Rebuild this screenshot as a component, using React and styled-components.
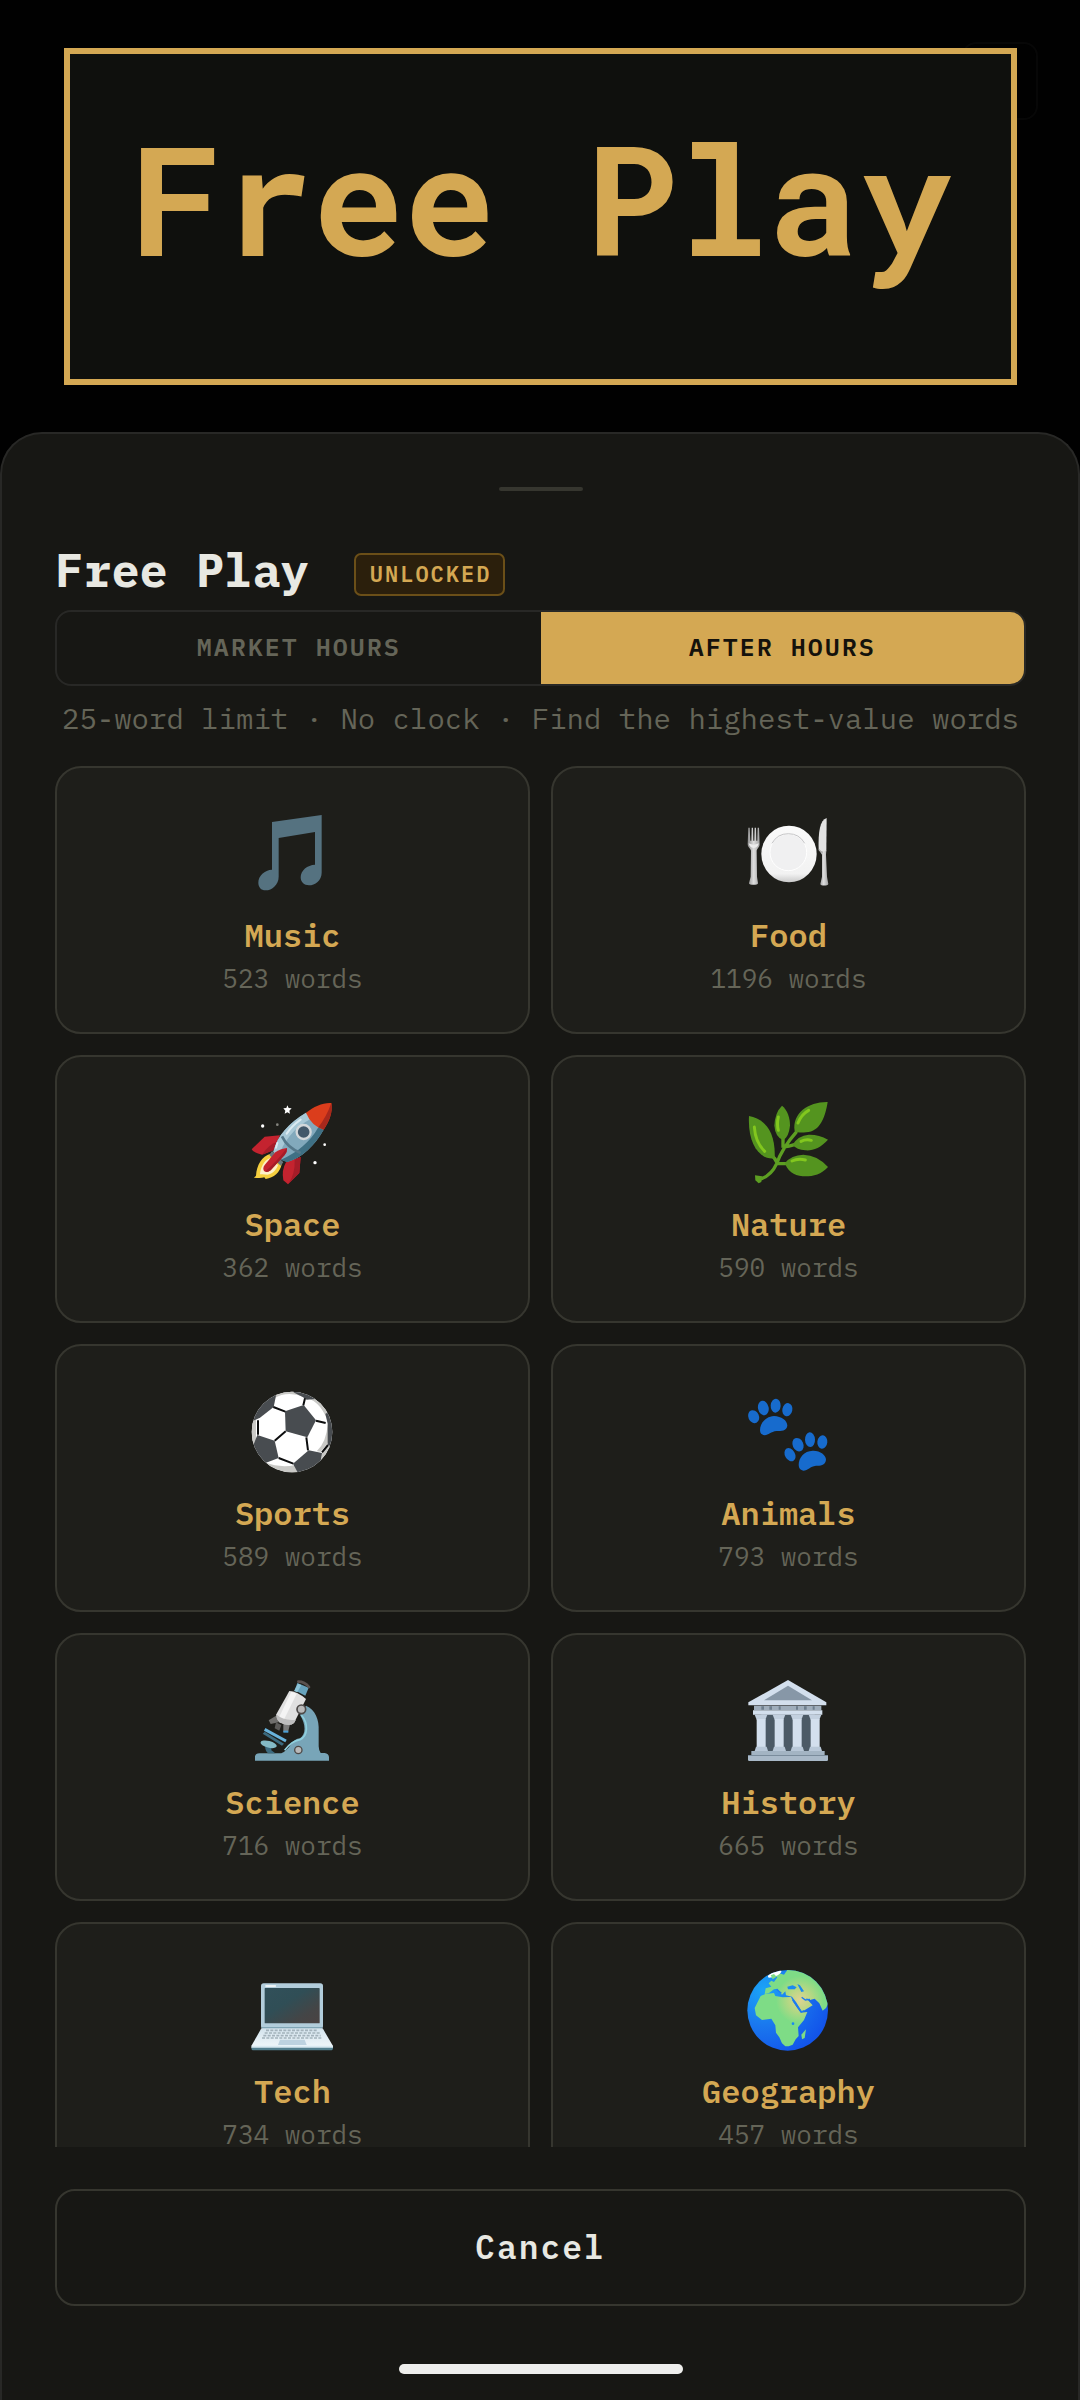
import React, { useState } from 'react';
import styled, { createGlobalStyle } from 'styled-components';

const MusicIcon = () => (
  <Emoji viewBox="637 159 246 246" aria-hidden="true">
    <path
      fill="#557280"
      d="M697 186L846 165V338C846 362 826 376 808 376C793 376 783 366 783 352C783 331 803 315 826 314V216L717 234V350C717 374 697 391 678 391C664 391 656 381 656 368C656 347 675 330 697 329Z"
    />
  </Emoji>
);

const FoodIcon = () => (
  <Emoji viewBox="624 159 246 246" aria-hidden="true">
    <defs>
      <linearGradient id="steel" x1="0" x2="1">
        <stop offset="0" stopColor="#8f8f8f" />
        <stop offset="0.5" stopColor="#dedede" />
        <stop offset="1" stopColor="#a2a2a2" />
      </linearGradient>
      <linearGradient id="plate" x1="0" x2="0" y1="0" y2="1">
        <stop offset="0" stopColor="#fafafa" />
        <stop offset="0.85" stopColor="#f2f2f2" />
        <stop offset="1" stopColor="#c9c9c9" />
      </linearGradient>
    </defs>
    <path
      fill="url(#steel)"
      d="M625 203H629L631 242H634L635 203H639L640 242H643L644 203H648L649 242H652L653 203H657L659 252C659 262 651 266 650 272L651 350L654 370C654 376 627 376 627 370L632 350L633 272C632 266 623 262 623 252Z"
    />
    <path fill="#ececec" d="M626 250Q641 258 656 250Q655 262 641 264Q628 262 626 250Z" />
    <ellipse cx="747" cy="282" rx="83" ry="85" fill="url(#plate)" />
    <circle cx="745" cy="277" r="55" fill="#f0f0f1" stroke="#fff" strokeWidth="3" />
    <path fill="none" stroke="#c4c4c6" strokeWidth="3" d="M696 250A56 56 0 0 1 794 250" />
    <path fill="#e2e2e2" d="M860 174C840 180 834 215 836 271L846 280L859 274Z" />
    <path fill="url(#steel)" d="M837 271Q848 278 859 271L858 284L861 350L865 372C864 378 841 378 841 372L846 350V284Z" />
    <path fill="none" stroke="#a9a9a9" strokeWidth="3" d="M838 268Q841 277 849 277" />
  </Emoji>
);

const SpaceIcon = () => (
  <Emoji viewBox="156 63 246 246" aria-hidden="true">
    <path fill="#f5cf3f" d="M212 218C185 226 170 252 168 284L162 290Q182 293 193 289L197 294C222 291 240 274 245 250Z" />
    <path fill="#fdf0c8" d="M208 232C192 240 182 258 180 280Q190 279 202 281C218 278 230 266 234 252Z" />
    <path fill="#c4232f" d="M240 163L194 167L155 205Q158 214 186 221L222 207Z" />
    <path fill="#a51c28" d="M186 221L222 207L232 182Q206 190 186 221Z" />
    <path fill="#c4232f" d="M302 228L298 276L264 310L250 298Q244 268 258 244Z" />
    <path fill="#a51c28" d="M302 228L298 276L264 310Q286 280 284 236Z" />
    <path fill="#6b777c" d="M216 210L250 244L242 254L208 222Z" />
    <path fill="#82a9bc" d="M318 95C266 126 232 164 220 212Q232 235 262 243C306 230 344 194 371 146Z" />
    <path fill="#a8c8d6" d="M318 95C266 126 232 164 220 212Q226 222 236 230C246 188 280 140 336 112Z" />
    <path fill="#3f7084" d="M371 146C344 194 306 230 262 243Q250 240 243 236C290 216 330 184 355 139Z" />
    <path fill="none" stroke="#55788a" strokeWidth="8" d="M246 166Q262 200 302 216" />
    <path fill="none" stroke="#dbeaf1" strokeWidth="6" strokeLinecap="round" d="M302 116Q276 134 260 158M232 186L228 200" />
    <path fill="#db3d1c" d="M318 95C342 76 370 64 394 66C399 92 388 122 371 146Q334 134 318 95Z" />
    <path fill="#a8281c" d="M394 66C399 92 388 122 371 146L355 139Q380 106 394 66Z" />
    <circle cx="311" cy="153" r="21" fill="#42586a" stroke="#d2d7da" strokeWidth="7" />
    <path fill="#c4232f" d="M261 201Q262 212 254 222L212 268Q201 276 192 270Q187 262 194 252L226 214Q244 202 261 201Z" />
    <path fill="#a51c28" d="M261 201Q262 212 254 222L212 268Q201 276 196 271Q226 246 261 201Z" />
    <path fill="#fff" d="M262 73L266 81L275 82L268 89L270 98L262 94L254 98L256 89L250 82L259 81Z" />
    <circle cx="188" cy="135" r="5" fill="#fff" />
    <circle cx="232" cy="131" r="4" fill="#85857f" />
    <circle cx="374" cy="191" r="4" fill="#fff" />
    <circle cx="345" cy="245" r="5" fill="#fff" />
  </Emoji>
);

const NatureIcon = () => (
  <Emoji viewBox="144 63 246 246" aria-hidden="true">
    <path
      fill="none"
      stroke="#5d9f22"
      strokeWidth="10"
      d="M174 296Q212 288 230 248Q246 202 290 152M249 200V170M250 198Q266 196 286 190M230 248H262M230 244Q226 232 214 222"
    />
    <path fill="#5d9f22" d="M165 283L186 286L184 303L176 307L166 298Z" />
    <g fill="#54941f">
      <path d="M147 105C190 112 228 148 224 232C184 238 142 196 147 105Z" />
      <path d="M246 74C263 88 270 110 270 134Q266 170 249 177Q226 168 223 134Q225 94 246 74Z" />
      <path d="M383 63C376 106 362 152 318 154Q292 156 284 150C276 96 326 62 383 63Z" />
      <path d="M384 176C362 200 338 210 316 208Q290 206 278 191Q294 164 326 161Q356 160 384 176Z" />
      <path d="M384 258C362 282 338 287 308 286Q266 282 255 246Q274 222 310 221Q352 222 384 258Z" />
    </g>
    <g fill="none" stroke="#82c71e" strokeWidth="9" strokeLinecap="round">
      <path d="M163 138Q166 184 194 211" />
      <path d="M235 108Q230 130 235 148" />
      <path d="M326 88Q304 100 294 126" />
      <path d="M303 181Q318 174 334 178" />
      <path d="M276 240Q294 232 316 237" />
    </g>
  </Emoji>
);

const SportsIcon = () => (
  <Emoji viewBox="156 62 246 246" aria-hidden="true">
    <clipPath id="ball">
      <circle cx="276" cy="185" r="121" />
    </clipPath>
    <g clipPath="url(#ball)">
      <path fill="#fff" d="M154 62H400V308H154Z" />
      <path fill="#c9c9c6" d="M222 84Q262 60 312 80L310 62H222ZM154 144L168 148V224L154 226ZM196 276Q240 294 286 284L296 308H190ZM384 224L364 250V276L396 240ZM322 84Q364 96 386 160L392 150Q370 90 330 74ZM383 160L386 216L362 244L350 243Q380 214 383 160Z" />
      <g fill="#484c50">
        <path d="M255 123L311 104L348 150L322 201L257 183Z" />
        <path d="M230 66L221 110L180 142L150 156V62Z" />
        <path d="M172 194L224 211L236 263L196 278L150 250Z" />
        <path d="M326 240L366 248L362 272L340 308H294L279 280Z" />
        <path d="M376 130L400 120V230L383 224V160Z" />
        <path d="M280 66L308 80L320 88L346 86L320 60Z" />
      </g>
      <path
        fill="none"
        stroke="#0c0d0e"
        strokeWidth="6"
        d="M220 110L256 124M310 105L315 84M348 151L377 158M319 201L324 240M257 183L224 211M236 263L280 280M174 150V193M366 246L384 224"
      />
    </g>
  </Emoji>
);

const AnimalsIcon = () => (
  <Emoji viewBox="144 62 246 246" aria-hidden="true">
    <g fill="#176bcd">
      <ellipse cx="161" cy="139" rx="16" ry="20" transform="rotate(-25 161 139)" />
      <ellipse cx="190" cy="113" rx="16" ry="22" transform="rotate(-12 190 113)" />
      <ellipse cx="227" cy="106" rx="15" ry="21" transform="rotate(4 227 106)" />
      <ellipse cx="262" cy="118" rx="15" ry="20" transform="rotate(12 262 118)" />
      <path d="M180 180C180 158 198 138 222 137C244 138 262 150 262 166C260 182 244 182 230 182C212 184 206 194 194 195C186 194 180 190 180 180Z" />
      <ellipse cx="270" cy="253" rx="15" ry="21" transform="rotate(-30 270 253)" />
      <ellipse cx="294" cy="223" rx="16" ry="21" transform="rotate(-25 294 223)" />
      <ellipse cx="330" cy="208" rx="15" ry="22" transform="rotate(-3 330 208)" />
      <ellipse cx="367" cy="215" rx="15" ry="20" transform="rotate(6 367 215)" />
      <path d="M296 284C296 262 312 242 338 241C360 240 378 254 378 268C376 286 360 286 348 286C330 288 324 300 310 301C302 300 296 294 296 284Z" />
    </g>
  </Emoji>
);

const ScienceIcon = () => (
  <Emoji viewBox="156 61 246 246" aria-hidden="true">
    <path
      fill="#78a5b8"
      d="M165 303V290Q167 281 178 281H244Q262 272 274 252Q284 238 300 236C318 224 318 194 300 166L318 138C346 150 358 180 356 214V260Q356 270 362 280H374Q386 282 387 292V303Z"
    />
    <path fill="none" stroke="#8fd0de" strokeWidth="5" d="M254 272Q274 244 300 240C324 228 326 192 304 166" />
    <path fill="#3c6b80" d="M196 256L214 260V272L226 281H204Q194 272 196 256Z" />
    <path fill="#3c6b80" d="M194 216L252 252L246 258L188 222Z" />
    <path fill="none" stroke="#68b3dc" strokeWidth="9" d="M194 209L258 244" />
    <ellipse cx="206" cy="254" rx="25" ry="10" fill="#84bac6" transform="rotate(14 206 254)" />
    <path fill="#67a3bd" d="M292 70L326 84L316 108L284 92Z" />
    <path fill="#8cc4d8" d="M294 72L304 76L292 98L282 94Z" />
    <path fill="none" stroke="#5a5250" strokeWidth="8" strokeLinecap="round" d="M295 66Q314 66 327 82" />
    <path fill="#706f6d" d="M232 166L206 182L212 193L236 188Z" />
    <path fill="#5c5b59" d="M228 188L244 196L238 213L224 206Z" />
    <path fill="#7b7b7a" d="M250 192L270 194L264 218L250 216Z" />
    <path fill="#4aa0d6" d="M250 213H265V219H250Z" />
    <path fill="#e0e0e0" d="M268 94Q290 94 318 118L282 190Q268 202 238 188Q228 176 229 164Z" />
    <path fill="#f4f4f4" d="M274 96L290 102L250 184L236 176Z" />
    <path fill="#bdbdbd" d="M229 164Q250 184 288 180L282 190Q268 202 238 188Q228 178 229 164Z" />
    <circle cx="304" cy="149" r="13" fill="#b9b9b9" stroke="#4d4a49" strokeWidth="5" />
    <circle cx="295" cy="271" r="11" fill="#b9b9b9" stroke="#4d4a49" strokeWidth="4" />
  </Emoji>
);

const HistoryIcon = () => (
  <Emoji viewBox="144 61 246 246" aria-hidden="true">
    <path fill="#4c5a66" d="M184 160H344V276H184Z" />
    <path fill="#d3dfed" d="M264 61L379 128V137H145V128Z" />
    <path fill="#8797a7" d="M264 78L336 122H192Z" />
    <path fill="#9fadbb" d="M162 138H364V152H162Z" />
    <path fill="#6f7f8e" d="M184 140H192V150H184ZM208 140H216V150H208ZM236 140H242V150H236ZM288 140H294V150H288ZM312 140H320V150H312ZM338 140H344V150H338Z" />
    <path fill="#d3dfed" d="M159 152H367V165H159Z" />
    {[164, 218, 272, 326].map((x) => (
      <g key={x}>
        <path fill="#c3d0df" d={`M${x} 165H${x + 38}L${x + 32} 180H${x + 6}Z`} />
        <path fill="#d3dfed" d={`M${x + 6} 178H${x + 33}V262H${x + 6}Z`} />
        <path fill="#b9c8d8" d={`M${x + 4} 261H${x + 36}L${x + 40} 274H${x}Z`} />
      </g>
    ))}
    <path fill="#a3b4c3" d="M154 274H374V286H154Z" />
    <path fill="#a9b9c8" d="M144 286H384V301Q384 304 380 304H148Q144 304 144 300Z" />
    <path fill="#7a8c9c" d="M144 286H384V289H144Z" />
  </Emoji>
);

const TechIcon = () => (
  <Emoji viewBox="156 59 246 246" aria-hidden="true">
    <defs>
      <linearGradient id="display" x1="0" x2="1" y1="0" y2="1">
        <stop offset="0" stopColor="#31505a" />
        <stop offset="0.4" stopColor="#304e56" />
        <stop offset="0.75" stopColor="#444546" />
        <stop offset="1" stopColor="#4a4242" />
      </linearGradient>
      <linearGradient id="deck" x1="0" x2="0" y1="0" y2="1">
        <stop offset="0" stopColor="#d3e3ec" />
        <stop offset="1" stopColor="#eef5f9" />
      </linearGradient>
    </defs>
    <rect x="183" y="102" width="186" height="136" rx="8" fill="#b2cddb" />
    <rect x="194" y="116" width="165" height="106" rx="2" fill="url(#display)" />
    <path stroke="#fff" strokeWidth="5" strokeLinecap="round" d="M198 110H226" />
    <path fill="#6f97a8" d="M186 234H366V238H186Z" />
    <path fill="url(#deck)" d="M184 237H368L399 290H154Z" />
    <path fill="none" stroke="#a3b2bb" strokeWidth="5" strokeDasharray="9 4" d="M198 243H354M194 251H360M190 259H362M186 266H366" />
    <path fill="#bdd2e0" d="M240 271H314L320 287H234Z" />
    <path fill="#d9e9f1" d="M154 289H399V296H154Z" />
    <path fill="#54808f" d="M154 295H399Q399 303 392 303H161Q154 303 154 295Z" />
  </Emoji>
);

const GeographyIcon = () => (
  <Emoji viewBox="144 59 246 246" aria-hidden="true">
    <defs>
      <radialGradient id="ocean" cx="0.2" cy="0.25" r="0.85">
        <stop offset="0" stopColor="#1ba4f7" />
        <stop offset="0.5" stopColor="#1a78ee" />
        <stop offset="1" stopColor="#1254ea" />
      </radialGradient>
      <radialGradient id="land" gradientUnits="userSpaceOnUse" cx="300" cy="152" r="90">
        <stop offset="0" stopColor="#dfd392" />
        <stop offset="0.4" stopColor="#b4d884" />
        <stop offset="0.8" stopColor="#7edc86" />
      </radialGradient>
      <clipPath id="earth">
        <circle cx="263" cy="183" r="121" />
      </clipPath>
    </defs>
    <g clipPath="url(#earth)">
      <path fill="url(#ocean)" d="M140 60H388V308H140Z" />
      <path
        fill="url(#land)"
        d="M182 140L196 134L222 131L226 140L248 144L273 143L280 158L290 174L302 190L322 188L312 212L294 234L296 260L287 270L278 286L266 291H256L246 282L238 264L228 250L226 228L214 208L186 212L168 198L164 176Z"
      />
      <path
        fill="url(#land)"
        d="M194 134L197 117L214 112L206 102L214 94L222 98L232 84L226 80L238 72L252 76L262 62H310L362 100L386 160L378 176L368 184L358 162L344 148L330 152L318 146L338 168L306 187L288 158L276 142L258 138L256 126L246 136L232 118L222 120L206 132Z"
      />
      <path fill="#1b8bf0" d="M262 112L278 108L290 114L284 120H264ZM292 104L300 108L312 126L304 128Z" />
      <path fill="none" stroke="#1b7df0" strokeWidth="4" d="M278 152L304 188L312 184M305 144L316 152L330 150M230 120L244 132" />
      <path fill="#7edc86" d="M318 240L314 266L306 270L304 256Z" />
      <circle cx="279" cy="223" r="4" fill="#1b8bf0" />
      <ellipse cx="224" cy="74" rx="22" ry="7" fill="#fff" transform="rotate(-24 224 74)" />
      <path fill="#7edc86" d="M212 78L222 74L230 82L218 90Z" />
    </g>
  </Emoji>
);

const categories = [
  { name: 'Music', words: 523, Icon: MusicIcon },
  { name: 'Food', words: 1196, Icon: FoodIcon },
  { name: 'Space', words: 362, Icon: SpaceIcon },
  { name: 'Nature', words: 590, Icon: NatureIcon },
  { name: 'Sports', words: 589, Icon: SportsIcon },
  { name: 'Animals', words: 793, Icon: AnimalsIcon },
  { name: 'Science', words: 716, Icon: ScienceIcon },
  { name: 'History', words: 665, Icon: HistoryIcon },
  { name: 'Tech', words: 734, Icon: TechIcon },
  { name: 'Geography', words: 457, Icon: GeographyIcon },
];

const App = () => {
  const [mode, setMode] = useState('after');

  return (
    <Screen>
      <GlobalStyle />
      <DimmedControl />
      <Banner>Free Play</Banner>
      <Sheet>
        <Handle />
        <TitleRow>
          <Title>Free Play</Title>
          <Badge>UNLOCKED</Badge>
        </TitleRow>
        <Toggle>
          <ToggleButton type="button" $active={mode === 'market'} onClick={() => setMode('market')}>
            MARKET HOURS
          </ToggleButton>
          <ToggleButton type="button" $active={mode === 'after'} onClick={() => setMode('after')}>
            AFTER HOURS
          </ToggleButton>
        </Toggle>
        <Rules>25-word limit · No clock · Find the highest-value words</Rules>
        <CategoryList>
          {categories.map(({ name, words, Icon }) => (
            <Card key={name} type="button">
              <Icon />
              <CardName>{name}</CardName>
              <CardCount>{words} words</CardCount>
            </Card>
          ))}
        </CategoryList>
        <CancelButton type="button">Cancel</CancelButton>
        <HomeIndicator />
      </Sheet>
    </Screen>
  );
};

export default App;


// PAGE
const GlobalStyle = createGlobalStyle`
  :root {
    --gold: #d4a853;
    --sheet: #171714;
    --card: #1e1e1a;
    --line: #36362f;
    --line-dark: #282826;
    --muted: #656558;
    --text: #e8e8e2;
  }
  * {
    box-sizing: border-box;
  }
  body {
    margin: 0;
    background: #010101;
  }
  body, button {
    font-family: "IBM Plex Mono", "Liberation Mono", monospace;
  }
`;

const Screen = styled.main`
  position: relative;
  display: flex;
  flex-direction: column;
  height: 100vh;
  padding-top: 48px;
`;

// sits under the banner, almost lost in the backdrop
const DimmedControl = styled.div`
  position: absolute;
  top: 42px;
  right: 42px;
  width: 76px;
  height: 78px;
  border: 2px solid #070707;
  border-radius: 14px;
`;

const Banner = styled.div`
  position: relative;
  flex: none;
  margin: 0 63px 47px 64px;
  padding: 57px 0 96px;
  border: 6px solid var(--gold);
  background: #0f100d;
  color: var(--gold);
  font-family: "Roboto Mono", "Liberation Mono", monospace;
  font-size: 152px;
  font-weight: 700;
  line-height: 172px;
  text-align: center;
  white-space: nowrap;
`;

// BOTTOM SHEET
const Sheet = styled.section`
  flex: 1;
  min-height: 0;
  display: flex;
  flex-direction: column;
  padding: 53px 52px 26px 53px;
  border: 2px solid var(--line-dark);
  border-bottom: 0;
  border-radius: 42px 42px 0 0;
  background: var(--sheet);
`;

const Handle = styled.div`
  flex: none;
  align-self: center;
  width: 84px;
  height: 4px;
  border-radius: 2px;
  background: var(--line);
`;

const TitleRow = styled.header`
  display: flex;
  align-items: flex-end;
  gap: 45px;
  margin: 53px 0 14px;
`;

const Title = styled.h1`
  margin: 0;
  color: var(--text);
  font-size: 47px;
  font-weight: 700;
  line-height: 52px;
`;

const Badge = styled.span`
  padding: 6px 12px 7px 14px;
  border: 2px solid #6b4f18;
  border-radius: 7px;
  background: #2b1f0c;
  color: var(--gold);
  font-size: 22px;
  font-weight: 600;
  letter-spacing: 2px;
  line-height: 26px;
`;

const Toggle = styled.div`
  flex: none;
  display: grid;
  grid-template-columns: 1fr 1fr;
  height: 76px;
  overflow: hidden;
  border: 2px solid var(--line-dark);
  border-radius: 16px;
`;

const ToggleButton = styled.button`
  padding: 0 0 4px;
  border: 0;
  background: ${({ $active }) => ($active ? 'var(--gold)' : 'transparent')};
  color: ${({ $active }) => ($active ? '#14120c' : 'var(--muted)')};
  font-size: 25px;
  font-weight: 600;
  letter-spacing: 2px;
`;

const Rules = styled.p`
  margin: 14px 0 30px;
  color: var(--muted);
  font-size: 29px;
  line-height: 36px;
  text-align: center;
  white-space: nowrap;
`;

// CATEGORIES
const CategoryList = styled.div`
  flex: 1;
  min-height: 0;
  display: grid;
  grid-template-columns: 1fr 1fr;
  align-content: start;
  gap: 21px;
  overflow: hidden;
`;

const Card = styled.button`
  display: flex;
  flex-direction: column;
  align-items: center;
  padding: 45px 0 38px;
  border: 2px solid var(--line);
  border-radius: 26px;
  background: var(--card);
`;

const Emoji = styled.svg`
  width: 82px;
  height: 82px;
  overflow: visible;
`;

const CardName = styled.span`
  margin: 20px 0 7px;
  color: var(--gold);
  font-size: 32px;
  font-weight: 600;
  line-height: 40px;
`;

const CardCount = styled.span`
  color: var(--muted);
  font-size: 26px;
  line-height: 32px;
`;

// FOOTER
const CancelButton = styled.button`
  flex: none;
  height: 117px;
  margin: 42px 0 58px;
  padding: 0 0 2px;
  border: 2px solid var(--line);
  border-radius: 20px;
  background: transparent;
  color: var(--text);
  font-size: 33px;
  font-weight: 600;
  letter-spacing: 2px;
`;

const HomeIndicator = styled.div`
  flex: none;
  align-self: center;
  width: 284px;
  height: 10px;
  border-radius: 5px;
  background: #eeeeec;
`;
